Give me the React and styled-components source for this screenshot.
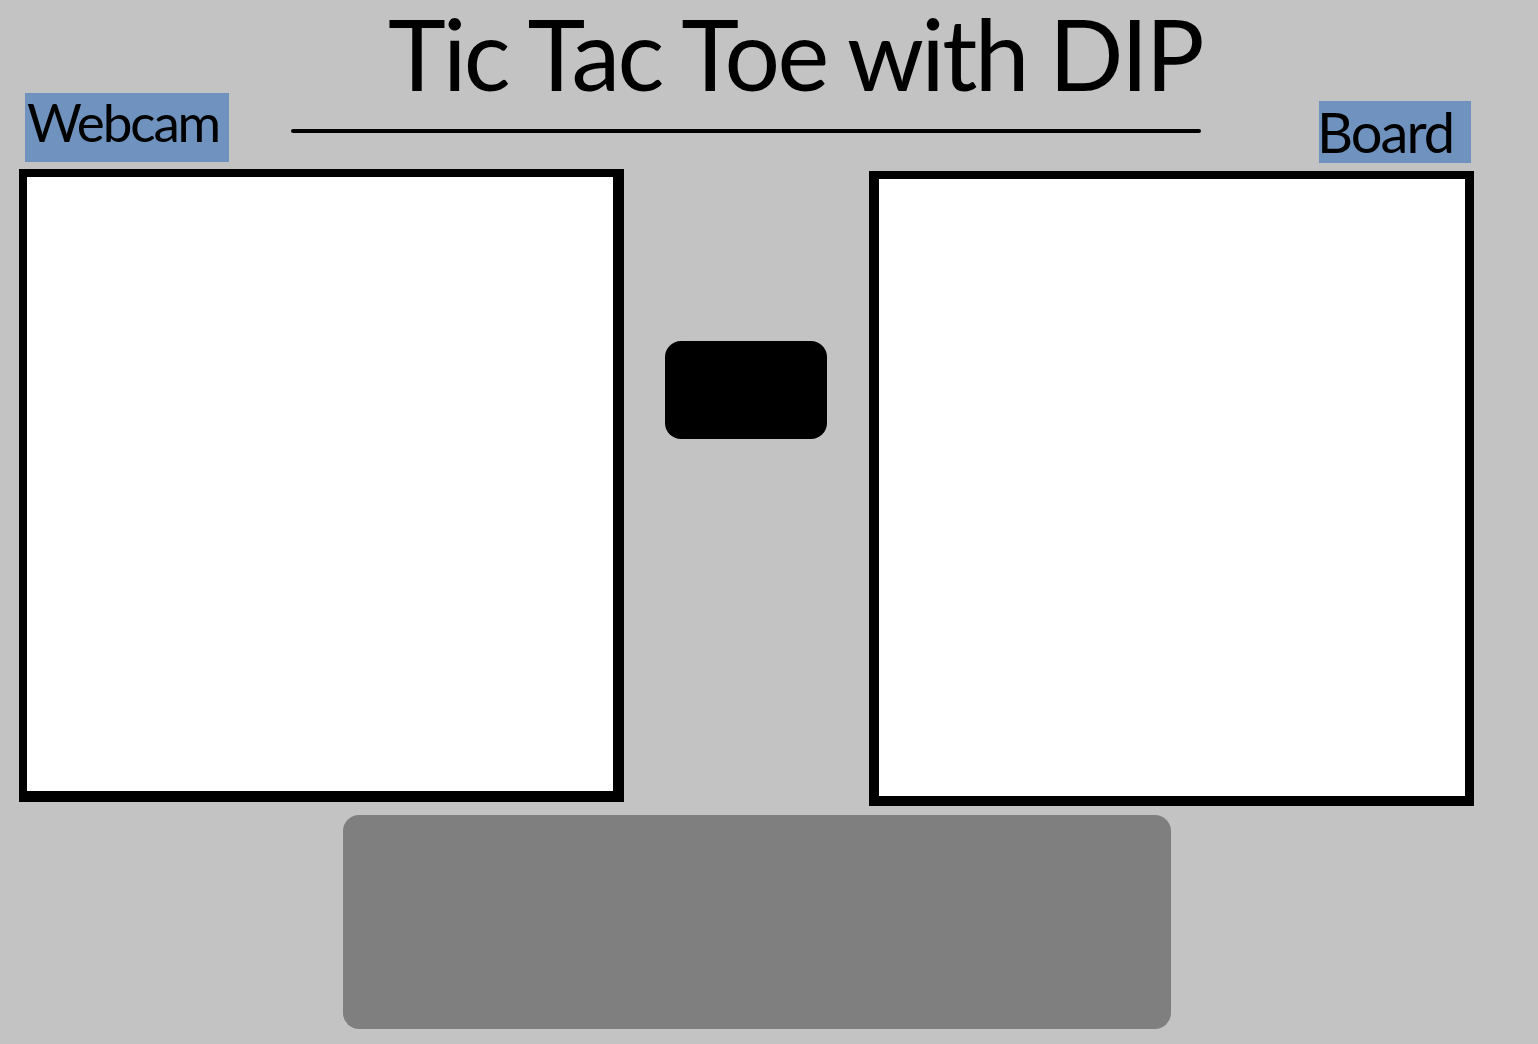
import React from "react";
import styled, { createGlobalStyle } from "styled-components";

const Global = createGlobalStyle`
  html, body {
    margin: 0;
    padding: 0;
    background: #c3c3c3;
  }
  body {
    font-family: Lato, "Open Sans", "Liberation Sans", sans-serif;
    color: #000;
  }
`;

const Page = styled.div`
  width: 1538px;
  min-height: 1044px;
  box-sizing: border-box;
  padding-left: 19px;
  display: flex;
  flex-direction: column;
`;

const Header = styled.header`
  display: flex;
  align-items: flex-start;
  height: 169px;
`;

const Label = styled.div`
  box-sizing: border-box;
  background: #7092be;
  font-size: ${(p) => p.$size}px;
  line-height: 1.1;
  width: ${(p) => p.$w}px;
  height: ${(p) => p.$h}px;
  margin-top: ${(p) => p.$top}px;
  margin-left: ${(p) => p.$left}px;
  text-indent: ${(p) => p.$indent}px;
  letter-spacing: ${(p) => p.$track}em;
  white-space: nowrap;
`;

const TitleBlock = styled.div`
  width: 910px;
  margin-left: 62px;
  display: flex;
  flex-direction: column;
`;

const Title = styled.h1`
  margin: 0;
  padding-left: 97px;
  font-size: 98px;
  line-height: 1.1;
  font-weight: 400;
  letter-spacing: -0.027em;
  white-space: nowrap;
`;

const Rule = styled.div`
  margin-top: 21px;
  height: 4px;
  border-radius: 2px;
  background: #000;
`;

const Main = styled.main`
  display: flex;
  align-items: flex-start;
`;

const Frame = styled.div`
  box-sizing: border-box;
  background: #fff;
  border-style: solid;
  border-color: #000;
  width: 605px;
  height: ${(p) => p.$h}px;
  margin-top: ${(p) => p.$top || 0}px;
  border-width: ${(p) => p.$borders};
`;

const Middle = styled.div`
  width: 245px;
  display: flex;
  flex-direction: column;
  padding-top: 172px;
  padding-left: 41px;
  box-sizing: border-box;
`;

const ActionButton = styled.button`
  width: 162px;
  height: 98px;
  border: none;
  border-radius: 16px;
  background: #000;
  padding: 0;
  cursor: pointer;
`;

const Console = styled.section`
  margin-top: 9px;
  margin-left: 324px;
  width: 828px;
  height: 214px;
  border-radius: 16px;
  background: #7f7f7f;
`;

export default function App() {
  return (
    <>
      <Global />
      <Page>
        <Header>
          <Label $size={53} $w={204} $h={69} $top={93} $left={6} $indent={2} $track={-0.04}>
            Webcam
          </Label>
          <TitleBlock>
            <Title>Tic Tac Toe with DIP</Title>
            <Rule />
          </TitleBlock>
          <Label $size={56} $w={152} $h={62} $top={101} $left={118} $indent={-2} $track={-0.035}>
            Board
          </Label>
        </Header>
        <Main>
          <Frame $h={633} $borders="8px 11px 11px 8px" />
          <Middle>
            <ActionButton aria-label="Play" />
          </Middle>
          <Frame $h={635} $top={2} $borders="8px 9px 10px 10px" />
        </Main>
        <Console />
      </Page>
    </>
  );
}
